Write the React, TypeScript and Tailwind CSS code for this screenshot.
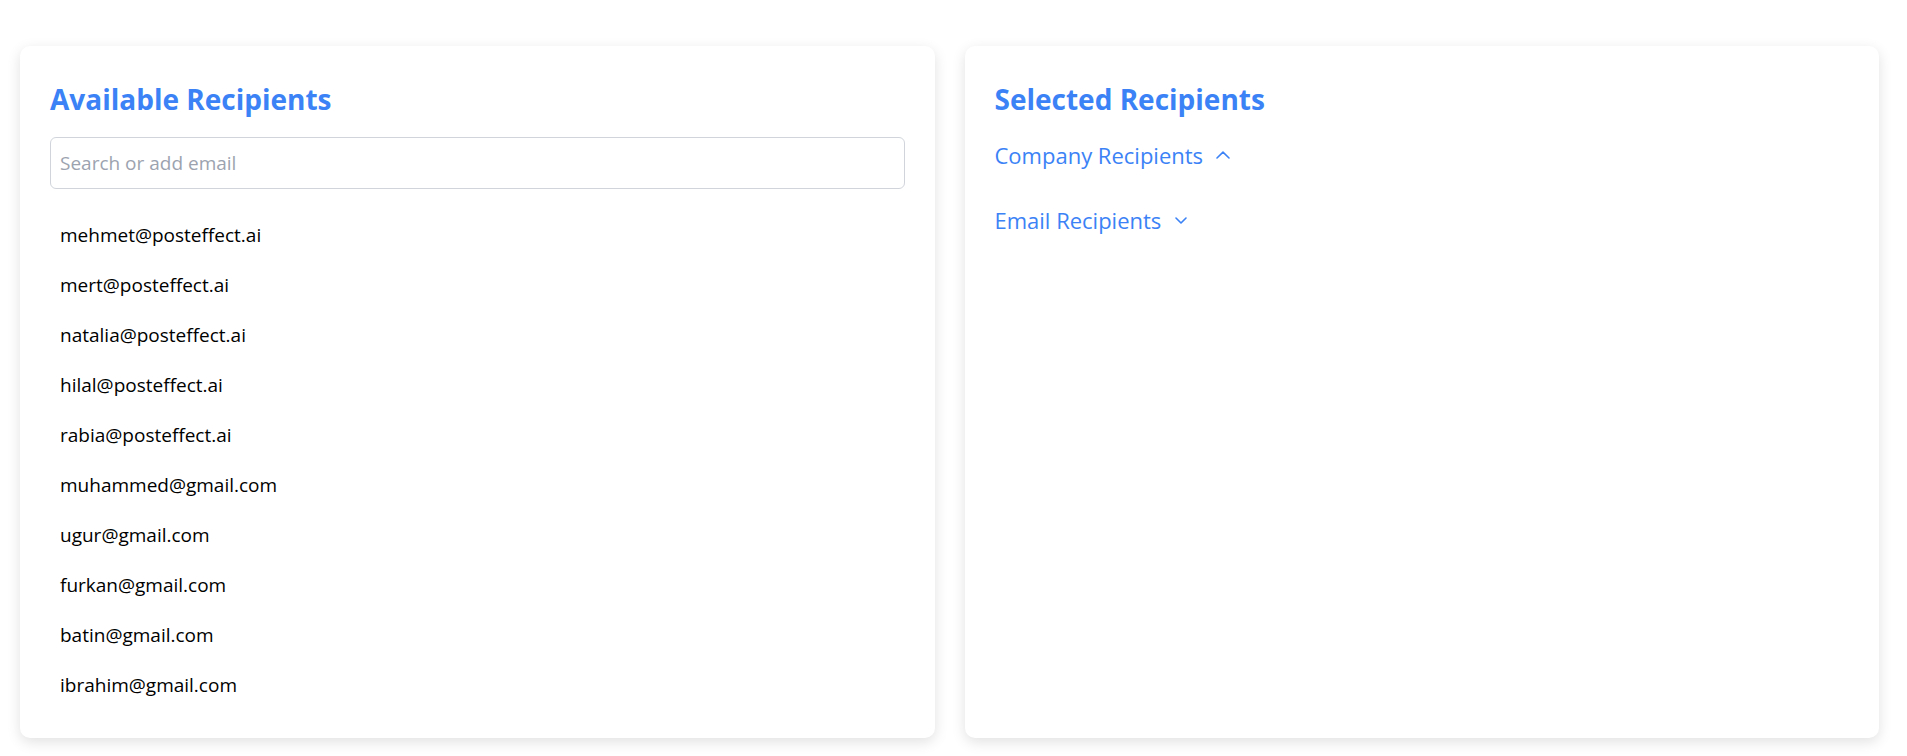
import React, { useState } from 'react';

const emails = [
  'mehmet@posteffect.ai',
  'mert@posteffect.ai',
  'natalia@posteffect.ai',
  'hilal@posteffect.ai',
  'rabia@posteffect.ai',
  'muhammed@gmail.com',
  'ugur@gmail.com',
  'furkan@gmail.com',
  'batin@gmail.com',
  'ibrahim@gmail.com',
];

function Chevron({ up }: { up: boolean }) {
  return up ? (
    <svg width="14" height="8" viewBox="0 0 14 8" fill="none" className="ml-[13px]">
      <polyline points="1,7 7,1.2 13,7" stroke="#3b82f6" strokeWidth="1.6" strokeLinecap="round" strokeLinejoin="round" />
    </svg>
  ) : (
    <svg width="12" height="7" viewBox="0 0 12 7" fill="none" className="ml-[14px]">
      <polyline points="1,1 6,6 11,1" stroke="#3b82f6" strokeWidth="1.6" strokeLinecap="round" strokeLinejoin="round" />
    </svg>
  );
}

function App() {
  const [query, setQuery] = useState('');
  const [companyOpen, setCompanyOpen] = useState(true);
  const [emailOpen, setEmailOpen] = useState(false);

  return (
    <div
      className="min-h-screen bg-white pt-[46px] pl-5 pr-7 text-black"
      style={{ fontFamily: '"Open Sans", "Noto Sans", sans-serif' }}
    >
      <div className="flex gap-[30px]">
        <div className="flex-1 rounded-[10px] bg-white px-[30px] pt-[35px] pb-7 shadow-[0_4px_14px_rgba(0,0,0,0.12)]">
          <h2 className="text-[28px] font-bold leading-[36px] text-[#3b82f6]">Available Recipients</h2>
          <input
            value={query}
            onChange={(e) => setQuery(e.target.value)}
            placeholder="Search or add email"
            className="mt-[20px] h-[52px] w-full rounded-md border border-[#d1d5db] px-[9px] text-[19px] outline-none placeholder:text-[#9ca3af]"
          />
          <ul className="mt-[21px]">
            {emails
              .filter((e) => e.includes(query))
              .map((email) => (
                <li key={email} className="px-[10px] py-3 text-[19px] leading-[26px]">
                  {email}
                </li>
              ))}
          </ul>
        </div>

        <div className="flex-1 rounded-[10px] bg-white px-[30px] pt-[35px] pb-[30px] shadow-[0_4px_14px_rgba(0,0,0,0.12)]">
          <h2 className="text-[28px] font-bold leading-[36px] text-[#3b82f6]">Selected Recipients</h2>
          <button
            onClick={() => setCompanyOpen(!companyOpen)}
            className="mt-[24px] flex items-center text-[22px] font-medium leading-[28px] text-[#3b82f6]"
          >
            Company Recipients
            <Chevron up={companyOpen} />
          </button>
          <button
            onClick={() => setEmailOpen(!emailOpen)}
            className="mt-[37px] flex items-center text-[22px] font-medium leading-[28px] text-[#3b82f6]"
          >
            Email Recipients
            <Chevron up={emailOpen} />
          </button>
        </div>
      </div>
    </div>
  );
}

export default App;
